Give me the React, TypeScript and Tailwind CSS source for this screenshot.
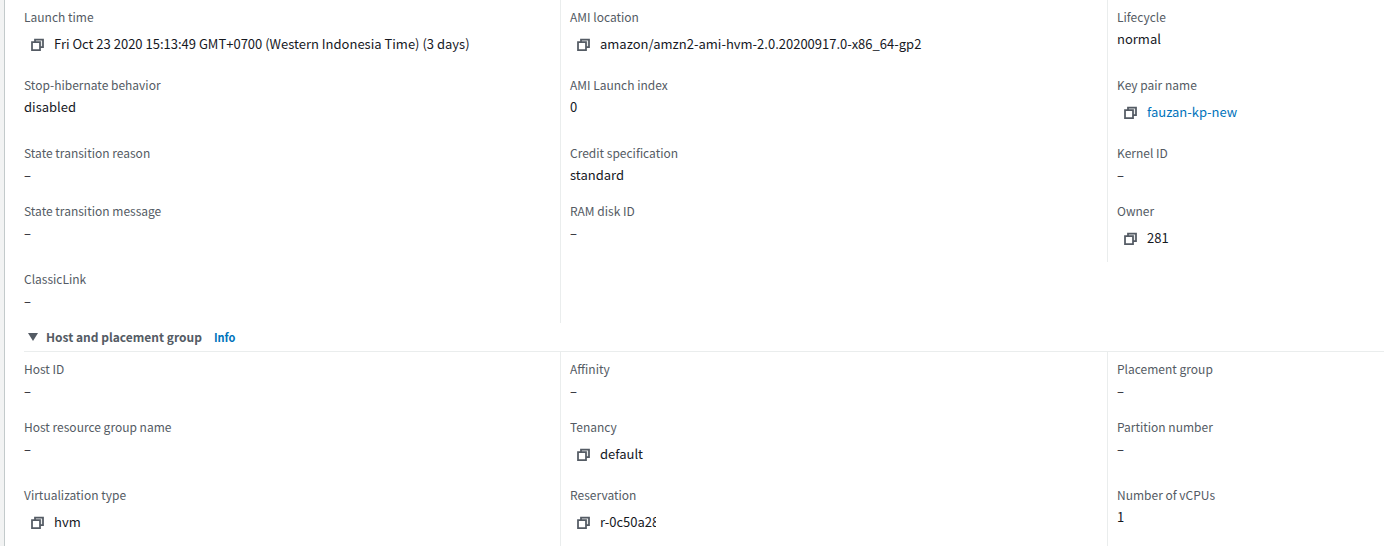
import { useState, type ReactNode } from "react";

type Field = {
  label: string;
  value?: string;
  copy?: boolean;
  href?: string;
  clipped?: boolean;
};

const instanceFields: (Field | null)[] = [
  { label: "Launch time", value: "Fri Oct 23 2020 15:13:49 GMT+0700 (Western Indonesia Time) (3 days)", copy: true },
  { label: "AMI location", value: "amazon/amzn2-ami-hvm-2.0.20200917.0-x86_64-gp2", copy: true },
  { label: "Lifecycle", value: "normal" },
  { label: "Stop-hibernate behavior", value: "disabled" },
  { label: "AMI Launch index", value: "0" },
  { label: "Key pair name", value: "fauzan-kp-new", copy: true, href: "#key-pair" },
  { label: "State transition reason" },
  { label: "Credit specification", value: "standard" },
  { label: "Kernel ID" },
  { label: "State transition message" },
  { label: "RAM disk ID" },
  { label: "Owner", value: "281", copy: true },
  { label: "ClassicLink" },
  null,
];

const hostFields: (Field | null)[] = [
  { label: "Host ID" },
  { label: "Affinity" },
  { label: "Placement group" },
  { label: "Host resource group name" },
  { label: "Tenancy", value: "default", copy: true },
  { label: "Partition number" },
  { label: "Virtualization type", value: "hvm", copy: true },
  { label: "Reservation", value: "r-0c50a28", copy: true, clipped: true },
  { label: "Number of vCPUs", value: "1" },
];

function CopyIcon() {
  return (
    <svg width="13" height="13" viewBox="0 0 13 13" fill="none" stroke="#545b64" strokeWidth="1.75" aria-hidden="true">
      <path d="M4 4V1.500h8v7.500H9" fill="#eaeded" />
      <path d="M1 4h8v8H1z" fill="#fff" />
    </svg>
  );
}

function FieldValue({ field }: { field: Field }) {
  const text = field.value ?? "–";
  let content: ReactNode = text;
  if (field.href) {
    content = (
      <a href={field.href} className="text-[#0073bb] hover:underline">
        {text}
      </a>
    );
  } else if (field.clipped) {
    content = <span className="block w-14 overflow-hidden whitespace-nowrap">{text}</span>;
  }

  if (!field.copy) {
    return <dd className="text-[#16191f]">{content}</dd>;
  }
  return (
    <dd className="flex h-8 items-center gap-2.5 pl-[7px] text-[#16191f]">
      <button
        type="button"
        aria-label={`Copy ${field.label}`}
        className="shrink-0 cursor-pointer"
        onClick={() => void navigator.clipboard?.writeText(text)}
      >
        <CopyIcon />
      </button>
      {content}
    </dd>
  );
}

function FieldGrid({ fields }: { fields: (Field | null)[] }) {
  return (
    <dl className="grid grid-cols-[536fr_547fr_277fr]">
      {fields.map((field, i) => (
        <div
          key={i}
          className={`min-w-0 pt-1.5 ${i >= 12 ? "pb-[11px]" : "pb-2"} ${i % 3 === 0 ? "" : "border-l border-[#eaeded] pl-[9px]"}`}
        >
          {field && (
            <>
              <dt className="text-[12px] text-[#545b64]">{field.label}</dt>
              <FieldValue field={field} />
            </>
          )}
        </div>
      ))}
    </dl>
  );
}

export default function App() {
  const [open, setOpen] = useState(true);
  return (
    <div className="min-h-screen bg-[#f2f3f3] pl-1 font-['Noto_Sans_CJK_SC','Noto_Sans',sans-serif] text-[13px] leading-[22px]">
      <main className="min-h-screen border-l border-[#c3cacb] bg-white pl-[19px]">
        <FieldGrid fields={instanceFields} />
        <section>
          <div className="flex h-[29px] items-center gap-3 border-b border-[#eaeded]">
            <h2 className="text-[12px] font-bold text-[#545b64]">
              <button
                type="button"
                aria-expanded={open}
                className="flex cursor-pointer items-center gap-2 pl-1"
                onClick={() => setOpen(!open)}
              >
                <svg
                  width="10"
                  height="8"
                  viewBox="0 0 10 8"
                  fill="#545b64"
                  aria-hidden="true"
                  className={open ? "" : "-rotate-90"}
                >
                  <path d="M0 0h10L5 8z" />
                </svg>
                Host and placement group
              </button>
            </h2>
            <a href="#info" className="text-[11px] font-bold text-[#0073bb]">
              Info
            </a>
          </div>
          {open && <FieldGrid fields={hostFields} />}
        </section>
      </main>
    </div>
  );
}
